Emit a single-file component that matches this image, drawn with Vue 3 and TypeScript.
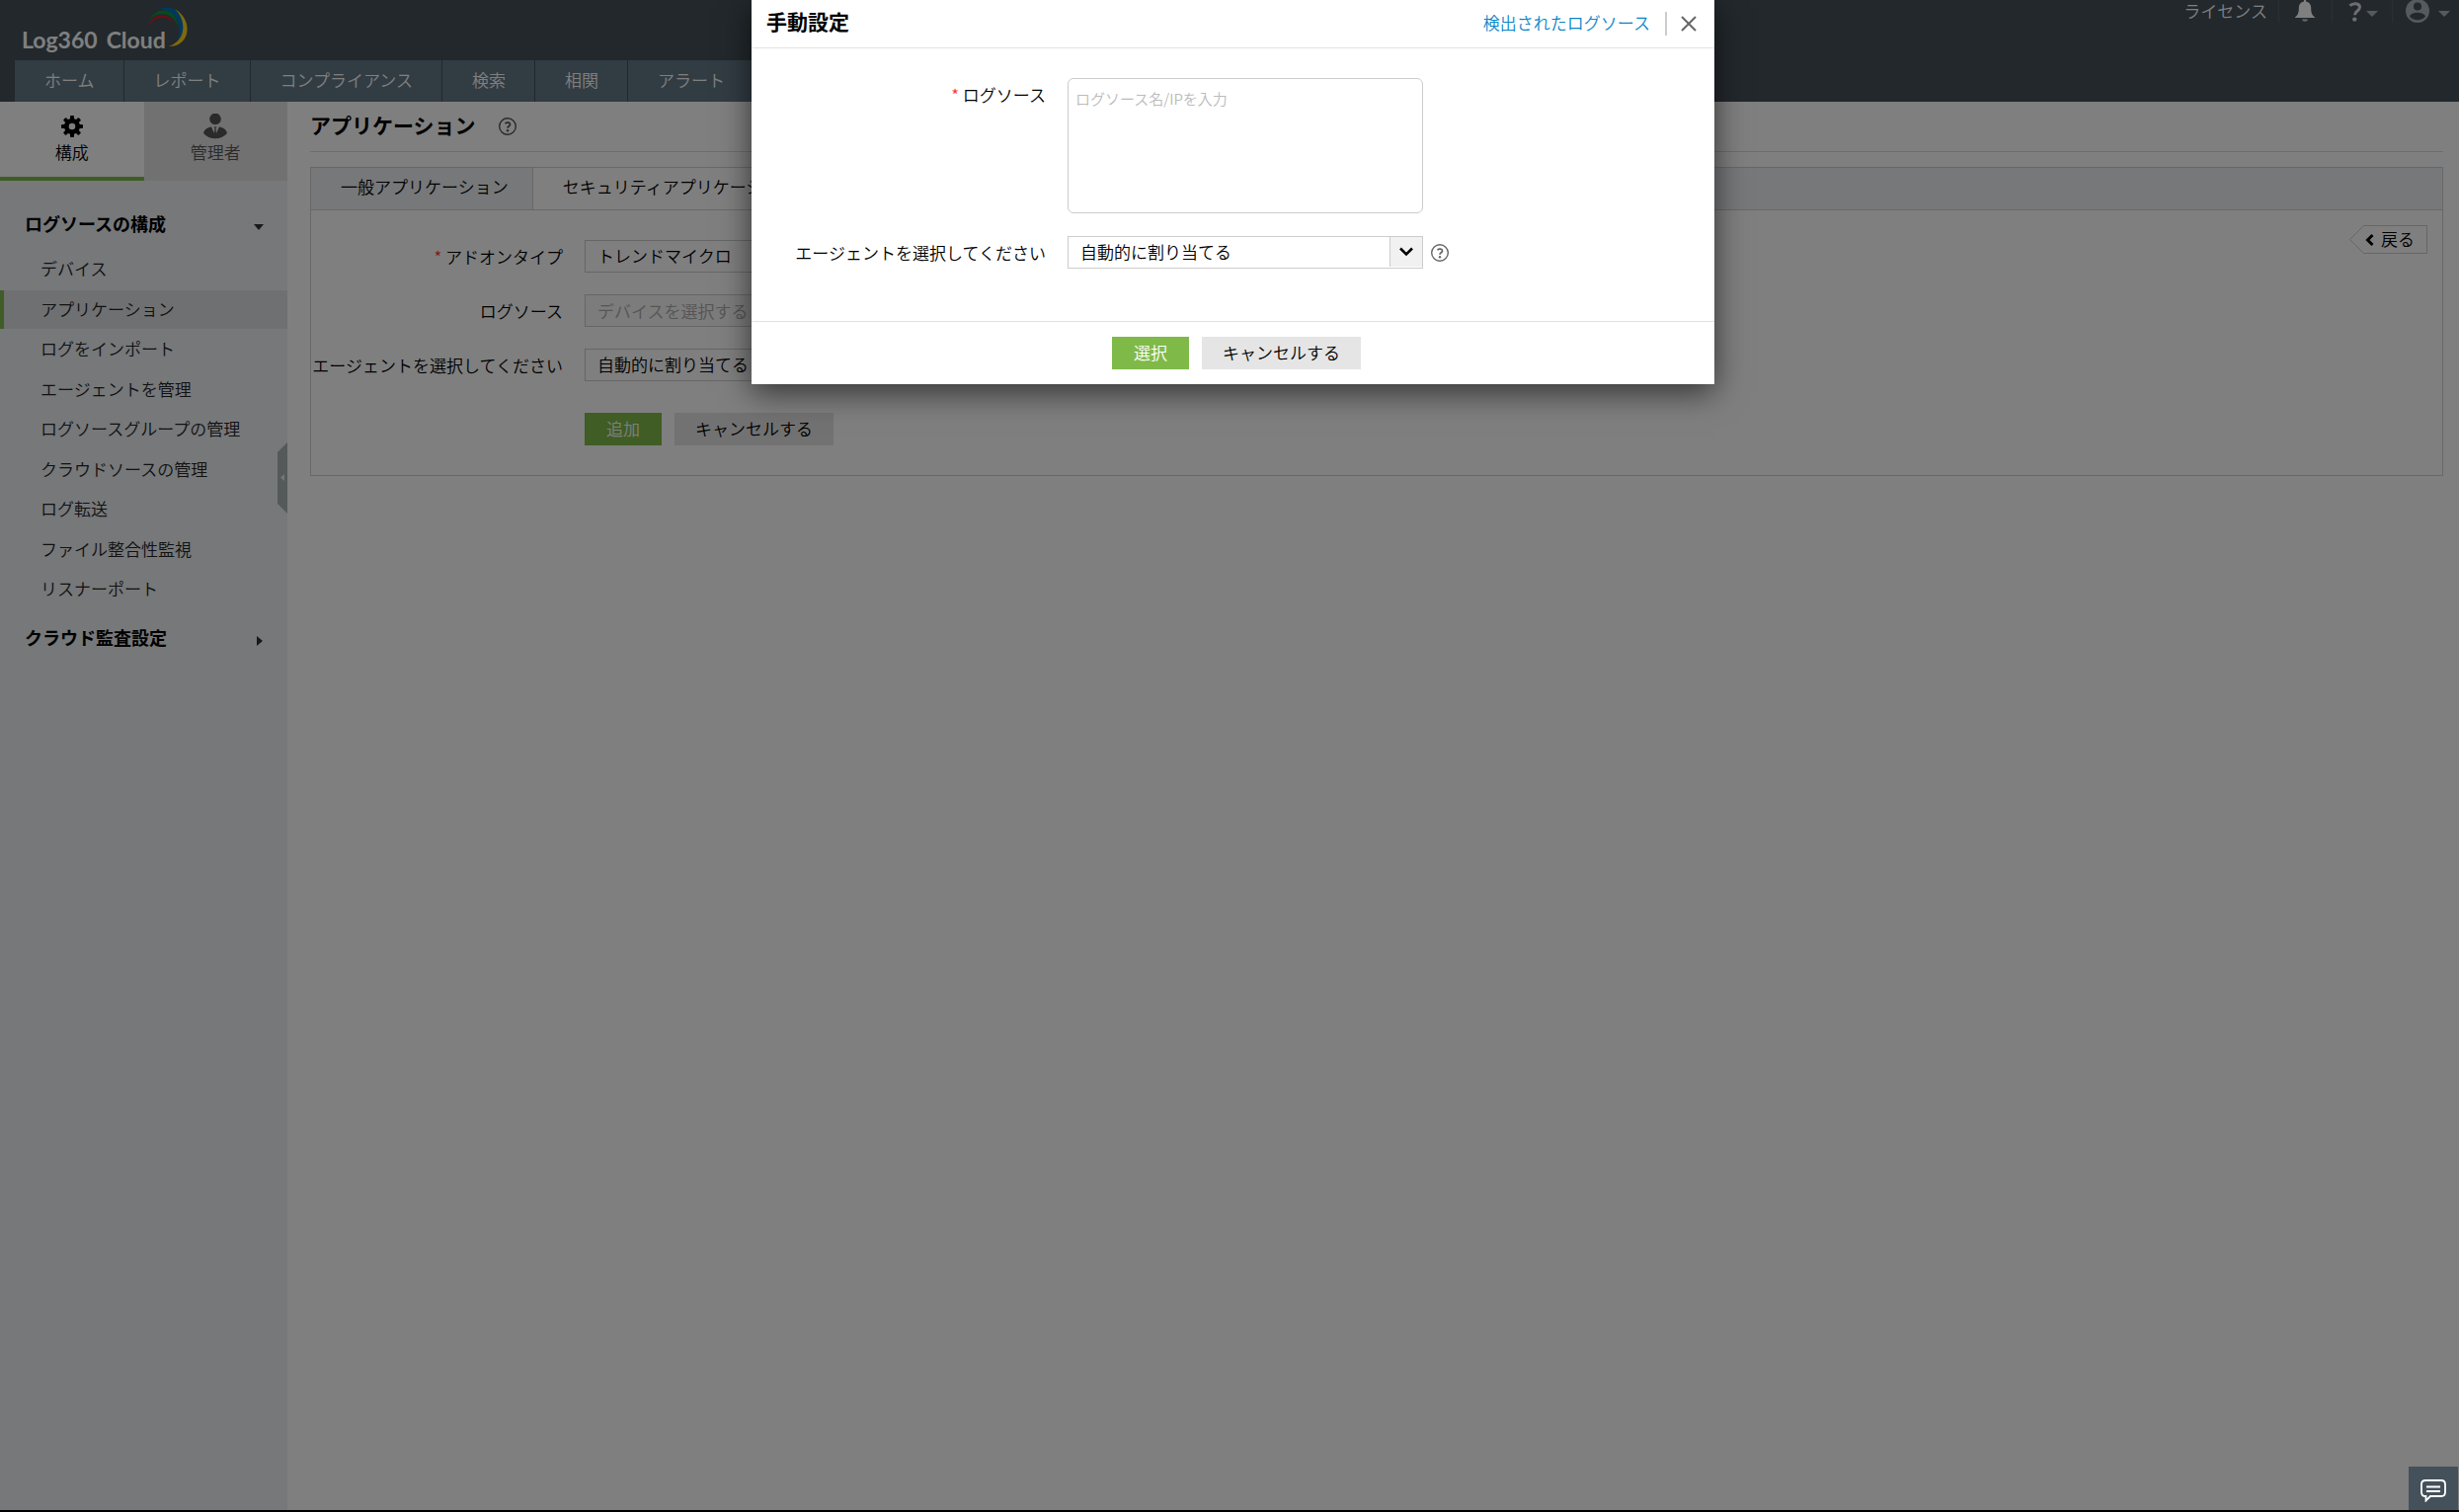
<script setup lang="ts">
import { ref } from 'vue'

const navItems: string[] = ['ホーム', 'レポート', 'コンプライアンス', '検索', '相関', 'アラート']

const menuItems: string[] = [
  'デバイス',
  'アプリケーション',
  'ログをインポート',
  'エージェントを管理',
  'ログソースグループの管理',
  'クラウドソースの管理',
  'ログ転送',
  'ファイル整合性監視',
  'リスナーポート',
]
const activeItem = ref('アプリケーション')
const logSources = ref('')
</script>

<template>
  <div class="page">
    <header class="top">
      <div class="brand-row">
        <a class="brand" href="#" aria-label="Log360 Cloud">
          <span>Log360</span><span>Cloud</span>
          <svg class="swoosh" width="42" height="42" viewBox="0 0 42 42" aria-hidden="true">
            <path d="M1 21 C4 7 21 5 28 18 C20 9 7 10 1 21Z" fill="#c8232f" />
            <path d="M2 14 C10 0 30 1 31 21 C26 6 11 5 2 14Z" fill="#0b9444" />
            <path d="M13 3 C27 -3 40 10 36 25 C35 30 33 33 31 35 C36 20 30 4 13 3Z" fill="#0072bc" />
            <path d="M28 3 C47 14 44 41 22 41 C40 35 40 14 28 3Z" fill="#ffd21e" />
          </svg>
        </a>
        <div class="tools">
          <a class="license" href="#">ライセンス</a>
          <button class="tool bell" aria-label="notifications">
            <svg width="20" height="22" viewBox="0 0 20 22"><path d="M9 0h2v1.500c3.400.6 5.200 3 5.200 6.500 0 5 .8 7 3.800 9.500v.5H0v-.5C3 15 3.800 13 3.800 8c0-3.500 1.800-5.900 5.200-6.500z" fill="#fff" /><path d="M7 19.500h6c-.5 3-5.500 3-6 0z" fill="#cfd4d6" /></svg>
          </button>
          <button class="tool help" aria-label="help">
            <svg width="14" height="20" viewBox="0 0 14 20"><path d="M1.500 3.800C4.500.8 11.500.8 11.500 5.300c0 3.700-5 3.800-5 8" fill="none" stroke="#d9dde0" stroke-width="3" /><circle cx="6.300" cy="17.600" r="2.200" fill="#d9dde0" /></svg>
            <svg class="caret" width="12" height="6" viewBox="0 0 12 6"><path d="M0 0h12L6 6z" fill="#aab4ba" /></svg>
          </button>
          <button class="tool user" aria-label="account">
            <svg width="24" height="24" viewBox="0 0 24 24"><circle cx="12" cy="12" r="12" fill="#aab4ba" /><circle cx="12" cy="7.500" r="4" fill="#445058" /><path d="M4 17.500c2-5 14-5 16 0-3.500 5-12.500 5-16 0z" fill="#445058" /></svg>
            <svg class="caret" width="12" height="6" viewBox="0 0 12 6"><path d="M0 0h12L6 6z" fill="#aab4ba" /></svg>
          </button>
        </div>
      </div>
      <nav class="nav">
        <a v-for="item in navItems" :key="item" href="#">{{ item }}</a>
      </nav>
    </header>

    <div class="body">
      <aside class="side">
        <div class="side-tabs">
          <a class="side-tab on" href="#">
            <svg width="24" height="26" viewBox="-12 -13 24 26" aria-hidden="true">
              <g fill="#000">
                <rect v-for="a in [0, 45, 90, 135]" :key="a" x="-2" y="-11" width="4" height="22" rx="1" :transform="`rotate(${a})`" />
              </g>
              <circle r="5.500" fill="none" stroke="#000" stroke-width="5" />
              <circle r="3.300" fill="#fff" />
            </svg>
            <span>構成</span>
          </a>
          <a class="side-tab" href="#">
            <svg width="24" height="26" viewBox="0 0 24 26" aria-hidden="true">
              <circle cx="12" cy="5.500" r="5.800" fill="#555" />
              <path d="M0 20c1-4 4-6 8-6.500L11 20l.5-5-1-1.500h3l-1 1.500.5 5 3-6.500c4 .5 7 2.500 8 6.500-6 7-18 7-24 0z" fill="#555" />
            </svg>
            <span>管理者</span>
          </a>
        </div>
        <button class="group">ログソースの構成
          <svg width="10" height="10" viewBox="0 0 10 10"><path d="M0 2h10L5 8z" fill="#333" /></svg>
        </button>
        <ul class="menu">
          <li v-for="item in menuItems" :key="item" :class="{ active: item === activeItem }">
            <a href="#" @click.prevent="activeItem = item">{{ item }}</a>
          </li>
        </ul>
        <button class="group second">クラウド監査設定
          <svg width="10" height="10" viewBox="0 0 10 10"><path d="M3 0v10l6-5z" fill="#333" /></svg>
        </button>
        <button class="collapse" aria-label="collapse">
          <svg width="10" height="72" viewBox="0 0 10 72"><path d="M10 0v72L0 62V10z" fill="#a9b2b5" /><path d="M7 32v7L3 35.500z" fill="#eee" /></svg>
        </button>
      </aside>

      <main class="main">
        <div class="title-row">
          <h1>アプリケーション</h1>
          <svg class="q" width="18" height="18" viewBox="0 0 18 18"><circle cx="9" cy="9" r="8.300" fill="none" stroke="#555" stroke-width="1.400" /><path d="M6.500 6.200c1.500-1.700 5.100-1.300 5 .9-.1 1.700-2.500 1.700-2.500 3.700" fill="none" stroke="#555" stroke-width="1.700" /><circle cx="9" cy="13.200" r="1.200" fill="#555" /></svg>
        </div>
        <section class="panel">
          <div class="tabs">
            <a href="#">一般アプリケーション</a>
            <a class="on" href="#">セキュリティアプリケーション</a>
          </div>
          <a class="back" href="#">
            <svg width="79" height="29" viewBox="0 0 79 29" aria-hidden="true"><path d="M.5 14.500 14.500.5h64v28h-64z" fill="#fff" stroke="#ccc" /><path d="M23.500 10l-5 5 5 5" fill="none" stroke="#000" stroke-width="3" /></svg>
            <span>戻る</span>
          </a>
          <form class="form" @submit.prevent>
            <div class="row">
              <label for="addon"><i>*</i> アドオンタイプ</label>
              <div class="select"><select id="addon"><option>トレンドマイクロ</option></select></div>
            </div>
            <div class="row">
              <label for="source">ログソース</label>
              <input id="source" class="field" type="text" placeholder="デバイスを選択する" readonly />
            </div>
            <div class="row">
              <label for="agent">エージェントを選択してください</label>
              <div class="select"><select id="agent"><option>自動的に割り当てる</option></select></div>
            </div>
            <div class="actions">
              <button class="btn primary">追加</button>
              <button class="btn" type="button">キャンセルする</button>
            </div>
          </form>
        </section>
      </main>
    </div>

    <div class="overlay">
      <div class="modal" role="dialog" aria-labelledby="modal-title">
        <div class="modal-head">
          <h2 id="modal-title">手動設定</h2>
          <a href="#">検出されたログソース</a>
          <button class="close" aria-label="close">
            <svg width="16" height="16" viewBox="0 0 16 16"><path d="M1 1l14 14M15 1L1 15" stroke="#666" stroke-width="2" /></svg>
          </button>
        </div>
        <div class="modal-body">
          <div class="row top-row">
            <label for="names"><i>*</i> ログソース</label>
            <textarea id="names" v-model="logSources" placeholder="ログソース名/IPを入力"></textarea>
          </div>
          <div class="row">
            <label for="modal-agent">エージェントを選択してください</label>
            <div class="select">
              <select id="modal-agent"><option>自動的に割り当てる</option></select>
              <span class="drop"><svg width="16" height="10" viewBox="0 0 16 10"><path d="M2 1.500l6 6 6-6" fill="none" stroke="#000" stroke-width="2.600" /></svg></span>
            </div>
            <svg class="q" width="18" height="18" viewBox="0 0 18 18"><circle cx="9" cy="9" r="8.300" fill="none" stroke="#666" stroke-width="1.400" /><path d="M6.500 6.200c1.500-1.700 5.100-1.300 5 .9-.1 1.700-2.500 1.700-2.500 3.700" fill="none" stroke="#666" stroke-width="1.700" /><circle cx="9" cy="13.200" r="1.200" fill="#666" /></svg>
          </div>
        </div>
        <div class="modal-foot">
          <button class="btn primary">選択</button>
          <button class="btn">キャンセルする</button>
        </div>
      </div>
    </div>

    <button class="chat" aria-label="chat">
      <svg width="26" height="24" viewBox="0 0 26 24"><path d="M5 2h16q4 0 4 4v8q0 4-4 4H10l-4.500 4.500V18H5q-4 0-4-4V6q0-4 4-4z" fill="none" stroke="#fff" stroke-width="1.800" /><path d="M6 8.500h14M6 13h14" stroke="#fff" stroke-width="1.800" /></svg>
    </button>
  </div>
</template>

<style>
body {
  margin: 0;
  background: #000;
}
</style>

<style scoped>
* {
  box-sizing: border-box;
}
.page {
  position: relative;
  display: flex;
  flex-direction: column;
  min-height: 100vh;
  border-bottom: 2px solid #000;
  background: #fff;
  color: #000;
  font: 350 17px/24px 'Noto Sans CJK JP', sans-serif;
}
a {
  color: inherit;
  text-decoration: none;
}
button,
input,
select,
textarea {
  margin: 0;
  padding: 0;
  border: 0;
  background: none;
  color: inherit;
  font: inherit;
}
svg {
  display: block;
  flex: none;
}
.top {
  background: #445058;
  color: #fff;
}
.brand-row {
  display: flex;
  justify-content: space-between;
  height: 61px;
  padding: 0 9px 0 22px;
}
.brand {
  position: relative;
  display: flex;
  gap: 9px;
  width: 170px;
  padding-top: 27px;
  font: 700 23px/26px Lato, sans-serif;
}
.swoosh {
  position: absolute;
  left: 127px;
  top: 6px;
}
.tools {
  display: flex;
  height: 23px;
}
.license {
  margin-right: 11px;
  line-height: 22px;
}
.tool {
  display: flex;
  align-items: flex-start;
  border-left: 1px solid #525e66;
}
.bell {
  padding: 0 17px 0 16px;
}
.help {
  padding: 2px 14px 0 16px;
}
.help .caret {
  margin: 9px 0 0 4px;
}
.user {
  padding-left: 13px;
}
.user svg:first-child {
  margin-top: -1px;
}
.user .caret {
  margin: 11px 0 0 9px;
}
.nav {
  display: flex;
  padding-left: 15px;
}
.nav a {
  padding: 8px 29px 10px 30px;
  border-right: 1px solid #445058;
  background: #647886;
}
.body {
  display: flex;
  flex: 1;
}
.side {
  position: relative;
  flex: none;
  width: 291px;
  background: #edf0f4;
}
.side-tabs {
  display: flex;
}
.side-tab {
  display: flex;
  flex: 1;
  flex-direction: column;
  align-items: center;
  gap: 1px;
  height: 80px;
  padding-top: 12px;
  background: #e2e2e2;
  color: #555;
}
.side-tab.on {
  border-bottom: 4px solid #7fba49;
  background: #fff;
  color: #000;
}
.group {
  display: flex;
  align-items: center;
  justify-content: space-between;
  width: 100%;
  padding: 0 24px 0 25px;
  margin: 31px 0 15px;
  font-weight: 700;
  font-size: 18px;
}
.group svg {
  margin-top: 8px;
}
.group.second {
  margin: 17px 0 0;
}
.menu {
  display: flex;
  flex-direction: column;
  justify-content: space-between;
  height: 363px;
  margin: 0;
  padding: 0;
  list-style: none;
  color: #222;
}
.menu a {
  display: block;
  padding: 0 0 2px 37px;
  border-left: 4px solid transparent;
  line-height: 37px;
}
.menu .active a {
  border-color: #7fba49;
  background: #dfe1e4;
}
.collapse {
  position: absolute;
  right: 0;
  top: 345px;
}
.main {
  flex: 1;
  padding: 0 16px 0 23px;
}
.title-row {
  display: flex;
  align-items: center;
  gap: 23px;
  height: 51px;
  border-bottom: 1px solid #d9d9d9;
}
h1,
h2 {
  margin: 0;
  font-size: 21px;
  font-weight: 700;
}
.title-row h1 {
  margin-bottom: 4px;
}
.panel {
  position: relative;
  margin-top: 15px;
  border: 1px solid #d0d0d0;
}
.tabs {
  display: flex;
  border-bottom: 1px solid #d0d0d0;
  background: #edf0f4;
}
.tabs a {
  padding: 7px 24px 11px 30px;
  border-right: 1px solid #d0d0d0;
}
.tabs .on {
  background: #fff;
}
.back {
  position: absolute;
  right: 15px;
  top: 58px;
}
.back span {
  position: absolute;
  left: 32px;
  top: 2px;
  white-space: nowrap;
}
.form {
  display: flex;
  flex-direction: column;
  gap: 22px;
  padding: 30px 0;
}
.row {
  display: flex;
  align-items: center;
  gap: 21px;
}
.row label {
  flex: none;
  width: 256px;
  padding-right: 1px;
  white-space: nowrap;
  text-align: right;
}
.row i {
  color: #f33;
  font-style: normal;
}
.select {
  position: relative;
  width: 360px;
}
.select select,
.field {
  display: block;
  width: 360px;
  height: 33px;
  padding: 0 12px 1px;
  border: 1px solid #ccc;
  border-radius: 0;
  background: #fff;
  appearance: none;
}
.field {
  background: #f8f8f8;
}
.field::placeholder {
  color: #aaa;
  opacity: 1;
}
.actions {
  display: flex;
  gap: 13px;
  margin: 10px 0 0 277px;
}
.btn {
  height: 33px;
  min-width: 78px;
  padding: 0 21px 2px;
  background: #e5e5e5;
}
.primary {
  background: #7fba49;
  color: #fff;
}
.overlay {
  position: absolute;
  inset: 0;
  display: flex;
  align-items: flex-start;
  justify-content: center;
  padding-left: 7px;
  background: rgba(0, 0, 0, 0.5);
}
.modal {
  width: 975px;
  background: #fff;
  box-shadow: 0 8px 30px rgba(0, 0, 0, 0.6);
}
.modal-head {
  display: flex;
  align-items: center;
  height: 49px;
  padding: 0 18px 0 15px;
  border-bottom: 1px solid #e2e2e2;
}
.modal-head h2 {
  margin: 0 auto 6px 0;
}
.modal-head a {
  padding-bottom: 2px;
  color: #0a86c8;
}
.close {
  margin-left: 15px;
  padding: 4px 0 4px 14px;
  border-left: 2px solid #ccc;
}
.modal-body {
  display: flex;
  flex-direction: column;
  gap: 23px;
  padding: 30px 0 53px 43px;
}
.top-row {
  align-items: flex-start;
}
.top-row label {
  padding-top: 5px;
}
textarea {
  display: block;
  width: 360px;
  height: 137px;
  padding: 8px 7px;
  border: 1px solid #ccc;
  border-radius: 6px;
  font-size: 15px;
  resize: none;
}
textarea::placeholder {
  color: #bbb;
  opacity: 1;
}
.drop {
  position: absolute;
  top: 1px;
  right: 1px;
  display: flex;
  align-items: center;
  justify-content: center;
  width: 33px;
  height: 30px;
  border-left: 1px solid #ccc;
  background: #f1f1f1;
  pointer-events: none;
}
.modal .q {
  margin-left: -13px;
}
.modal-foot {
  display: flex;
  justify-content: center;
  gap: 13px;
  padding: 15px 0 15px 7px;
  border-top: 1px solid #e2e2e2;
}
.chat {
  position: absolute;
  right: 1px;
  bottom: 0;
  display: flex;
  align-items: center;
  justify-content: center;
  width: 50px;
  height: 44px;
  padding-top: 4px;
  background: #44515a;
}
</style>
